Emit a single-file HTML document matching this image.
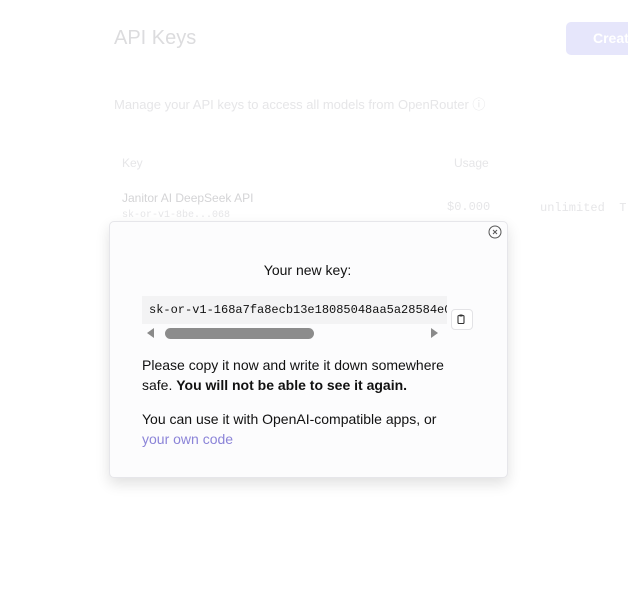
<!DOCTYPE html>
<html><head><style>
body{margin:0;width:628px;height:600px;background:#fff;position:relative;overflow:hidden;font-family:"Liberation Sans",sans-serif}
.a{position:absolute;white-space:nowrap}
.faint{color:#e6e6e8}
</style></head><body>
<div class="a faint" style="left:114px;top:27px;font-size:20px;color:#dcdcde">API Keys</div>
<div class="a" style="left:566px;top:22px;width:80px;height:33px;background:#e6e6fb;border-radius:5px"></div>
<div class="a" style="left:593px;top:30px;font-size:14px;font-weight:bold;color:#fff">Creat</div>
<div class="a faint" style="left:114px;top:94px;font-size:13px">Manage your API keys to access all models from OpenRouter ⓘ</div>
<div class="a faint" style="left:122px;top:156px;font-size:12px">Key</div>
<div class="a faint" style="left:454px;top:156px;font-size:12px">Usage</div>
<div class="a" style="left:122px;top:191px;font-size:12px;color:#d4d4d6">Janitor AI DeepSeek API</div>
<div class="a faint" style="left:122px;top:210px;font-size:10px;font-family:'Liberation Mono',monospace">sk-or-v1-8be...068</div>
<div class="a faint" style="left:447px;top:200px;font-size:12px;font-family:'Liberation Mono',monospace">$0.000</div>
<div class="a faint" style="left:540px;top:201px;font-size:12px;font-family:'Liberation Mono',monospace">unlimited&nbsp;&nbsp;T</div>

<div class="a" style="left:109px;top:221px;width:397px;height:255px;background:#fcfcfd;border:1px solid #e6e6ea;border-radius:5px;box-shadow:0 6px 14px rgba(0,0,0,0.12)"></div>
<svg class="a" style="left:487px;top:224px" width="16" height="16" viewBox="0 0 16 16"><circle cx="8" cy="8" r="6" fill="none" stroke="#555" stroke-width="1"/><path d="M6 6l4 4M10 6l-4 4" stroke="#555" stroke-width="1"/></svg>
<div class="a" style="left:109px;width:397px;text-align:center;top:262px;font-size:14px;color:#111">Your new key:</div>
<div class="a" style="left:142px;top:296px;width:305px;height:28px;background:#f3f3f4;overflow:hidden"><div style="padding:7px 0 0 7px;font-family:'Liberation Mono',monospace;font-size:12px;color:#111">sk-or-v1-168a7fa8ecb13e18085048aa5a28584e04</div></div>
<div class="a" style="left:147px;top:328px;width:0;height:0;border-top:5px solid transparent;border-bottom:5px solid transparent;border-right:7px solid #8a8a8a"></div>
<div class="a" style="left:165px;top:328px;width:149px;height:11px;background:#8c8c8c;border-radius:6px"></div>
<div class="a" style="left:431px;top:328px;width:0;height:0;border-top:5px solid transparent;border-bottom:5px solid transparent;border-left:7px solid #8a8a8a"></div>
<div class="a" style="left:451px;top:309px;width:20px;height:19px;border:1px solid #e3e3e6;border-radius:4px;background:#fff"></div>
<svg class="a" style="left:455px;top:313px" width="12" height="12" viewBox="0 0 12 12"><rect x="3" y="2.5" width="6" height="8" rx="1" fill="none" stroke="#333" stroke-width="1.1"/><rect x="4.5" y="1.5" width="3" height="2" fill="#333"/></svg>
<div class="a" style="left:142px;top:356px;font-size:14px;line-height:19.5px;color:#111">Please copy it now and write it down somewhere<br>safe. <b>You will not be able to see it again.</b></div>
<div class="a" style="left:142px;top:410px;font-size:14px;line-height:19.5px;color:#111">You can use it with OpenAI-compatible apps, or<br><span style="color:#8b84d8">your own code</span></div>
</body></html>
